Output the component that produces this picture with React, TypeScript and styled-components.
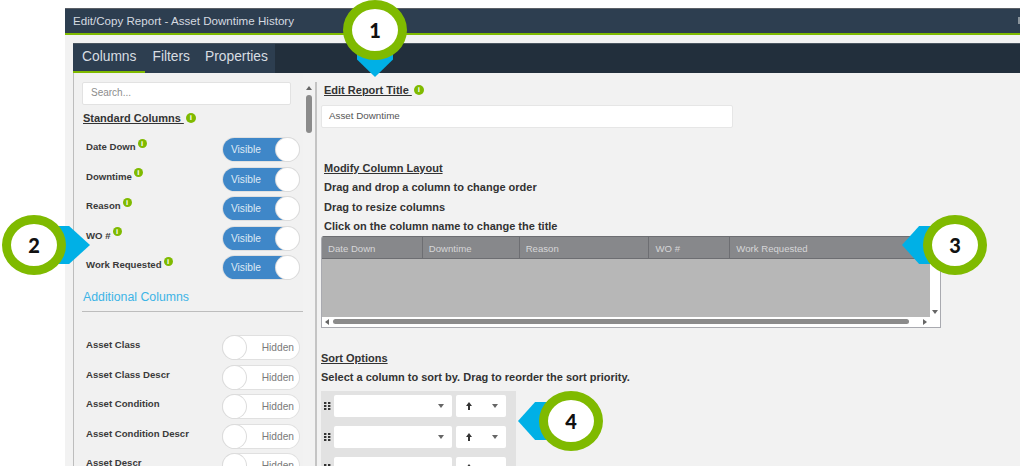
import styled, { createGlobalStyle } from 'styled-components';

const standardColumns = ['Date Down', 'Downtime', 'Reason', 'WO #', 'Work Requested'];
const additionalColumns = ['Asset Class', 'Asset Class Descr', 'Asset Condition', 'Asset Condition Descr', 'Asset Descr'];
const gridColumns = [
  { label: 'Date Down', width: 101 },
  { label: 'Downtime', width: 97 },
  { label: 'Reason', width: 130 },
  { label: 'WO #', width: 81 },
  { label: 'Work Requested', width: 200 },
];

const GlobalStyle = createGlobalStyle`
  html, body {
    margin: 0;
    background: #fff;
    font-family: "Liberation Sans", Arial, sans-serif;
  }
  * { box-sizing: border-box; }
`;

type Side = 'up' | 'down' | 'left' | 'right';
type Point = 'top' | 'left' | 'right';

function Callout({ n, cx, cy, point }: { n: number; cx: number; cy: number; point: Point }) {
  return (
    <CalloutWrap style={{ left: cx - 32, top: cy - 30 }}>
      <Pointer $point={point} />
      <Ring>{n}</Ring>
    </CalloutWrap>
  );
}

function Toggle({ on }: { on: boolean }) {
  return (
    <ToggleBox $on={on}>
      <ToggleText>{on ? 'Visible' : 'Hidden'}</ToggleText>
      <Knob />
    </ToggleBox>
  );
}

function Grip() {
  return (
    <GripIcon width="7" height="8" viewBox="0 0 7 8">
      {[0, 3, 6].map((y) => (
        <g key={y}>
          <rect x="0" y={y} width="2.4" height="2" fill="#333" />
          <rect x="4" y={y} width="2.4" height="2" fill="#333" />
        </g>
      ))}
    </GripIcon>
  );
}

function UpArrow() {
  return (
    <svg width="6" height="8" viewBox="0 0 6 8">
      <path d="M3 0 L6 4 H4 V8 H2 V4 H0 Z" fill="#333" />
    </svg>
  );
}

export default function App() {
  return (
    <Page>
      <GlobalStyle />
      <TitleBar>
        <span>Edit/Copy Report - Asset Downtime History</span>
        <TitleIcon />
      </TitleBar>
      <Body>
        <TabBar>
          <TabStrip>
            <Tab $active>Columns</Tab>
            <Tab>Filters</Tab>
            <Tab>Properties</Tab>
          </TabStrip>
        </TabBar>
        <Content>
          <Sidebar>
            <Search>Search...</Search>
            <StandardHeading>
              <u>Standard Columns&nbsp;</u>
              <Info $big>i</Info>
            </StandardHeading>
            <RowList>
              {standardColumns.map((name) => (
                <ColumnRow key={name}>
                  <RowLabel>
                    {name}
                    <Info>i</Info>
                  </RowLabel>
                  <Toggle on />
                </ColumnRow>
              ))}
            </RowList>
            <AdditionalHeading>Additional Columns</AdditionalHeading>
            <Divider />
            <HiddenList>
              {additionalColumns.map((name) => (
                <ColumnRow key={name}>
                  <RowLabel>{name}</RowLabel>
                  <Toggle on={false} />
                </ColumnRow>
              ))}
            </HiddenList>
          </Sidebar>
          <SideScroll>
            <Arrow $side="up" />
            <SideThumb />
          </SideScroll>
          <Main>
            <EditTitle>
              <u>Edit Report Title&nbsp;</u>
              <Info $big>i</Info>
            </EditTitle>
            <TitleInput>Asset Downtime</TitleInput>
            <LayoutHeading>Modify Column Layout</LayoutHeading>
            <Instruction>Drag and drop a column to change order</Instruction>
            <Instruction>Drag to resize columns</Instruction>
            <Instruction>Click on the column name to change the title</Instruction>
            <GridBox>
              <GridTop>
                <GridMain>
                  <GridHeader>
                    {gridColumns.map((c) => (
                      <HeaderCell key={c.label} style={{ width: c.width }}>
                        {c.label}
                      </HeaderCell>
                    ))}
                  </GridHeader>
                  <GridEmpty />
                </GridMain>
                <VScroll>
                  <Arrow $side="down" />
                </VScroll>
              </GridTop>
              <HScroll>
                <Arrow $side="left" />
                <HThumb />
                <Arrow $side="right" />
              </HScroll>
            </GridBox>
            <SortHeading>Sort Options</SortHeading>
            <SortHint>Select a column to sort by. Drag to reorder the sort priority.</SortHint>
            <SortPanel>
              {[0, 1, 2].map((i) => (
                <SortRow key={i}>
                  <Grip />
                  <ColumnSelect>
                    <Arrow $side="down" />
                  </ColumnSelect>
                  <DirectionSelect>
                    <UpArrow />
                    <Arrow $side="down" />
                  </DirectionSelect>
                </SortRow>
              ))}
            </SortPanel>
          </Main>
        </Content>
      </Body>
      <Callout n={1} cx={375} cy={30} point="top" />
      <Callout n={2} cx={34} cy={245} point="right" />
      <Callout n={3} cx={955} cy={245} point="left" />
      <Callout n={4} cx={571} cy={421} point="left" />
    </Page>
  );
}

const Page = styled.div`
  position: relative;
  width: 1020px;
  height: 466px;
  padding: 8px 0 0 65px;
  overflow: hidden;
  background: #fff;
`;

const TitleBar = styled.div`
  display: flex;
  align-items: center;
  justify-content: space-between;
  height: 27px;
  padding: 0 0 2px 8px;
  background: #2d3e50;
  border-top: 1px solid #5a5f66;
  border-bottom: 2px solid #7fba00;
  color: #d5dae0;
  font-size: 11.6px;
`;

const TitleIcon = styled.span`
  width: 2px;
  height: 7px;
  background: #8a949c;
`;

const Body = styled.div`
  height: 431px;
  padding: 8px 0 0 8px;
  background: #f2f2f2;
`;

const TabBar = styled.div`
  height: 30px;
  background: #222f3c;
  border-top: 1px solid #4a5560;
`;

const TabStrip = styled.div`
  display: flex;
  width: 202px;
  height: 29px;
  background: #2d3e50;
`;

const Tab = styled.div<{ $active?: boolean }>`
  padding: 0 ${({ $active }) => ($active ? '9px' : '7px')};
  margin-right: ${({ $active }) => ($active ? '0' : '1px')};
  line-height: 26px;
  font-size: 13.8px;
  color: #d8dde2;
  border-bottom: 2px solid ${({ $active }) => ($active ? '#7fba00' : 'transparent')};
`;

const Content = styled.div`
  display: flex;
  height: 393px;
`;

const Sidebar = styled.div`
  width: 230px;
  padding: 9px 0 0 8px;
  border-left: 1px solid #bdbdbd;
  background: #f1f1f1;
`;

const Search = styled.div`
  width: 209px;
  height: 23px;
  padding-left: 8px;
  background: #fff;
  border: 1px solid #e2e2e2;
  border-radius: 2px;
  color: #8d8d8d;
  font-size: 10px;
  line-height: 19px;
`;

const StandardHeading = styled.div`
  margin: 6px 0 0 1px;
  height: 14px;
  font-size: 11px;
  font-weight: 700;
  line-height: 14px;
  color: #333;
`;

const Info = styled.span<{ $big?: boolean }>`
  display: inline-block;
  position: relative;
  top: ${({ $big }) => ($big ? '-1px' : '-4px')};
  width: ${({ $big }) => ($big ? '10px' : '9px')};
  height: ${({ $big }) => ($big ? '10px' : '9px')};
  margin-left: 2px;
  border-radius: 50%;
  background: #7fba00;
  color: #fff;
  font-size: 8px;
  font-weight: 700;
  line-height: ${({ $big }) => ($big ? '10px' : '9px')};
  text-align: center;
  vertical-align: middle;
`;

const RowList = styled.div`
  display: flex;
  flex-direction: column;
  gap: 6.5px;
  margin-top: 13px;
`;

const HiddenList = styled(RowList)`
  margin-top: 24px;
`;

const ColumnRow = styled.div`
  display: flex;
  align-items: center;
  justify-content: space-between;
  width: 217px;
  height: 23px;
  padding-left: 4px;
  flex: none;
`;

const RowLabel = styled.div`
  margin-top: -6px;
  color: #3a3a3a;
  font-size: 9.6px;
  font-weight: 700;
`;

const ToggleBox = styled.div<{ $on: boolean }>`
  display: flex;
  flex-direction: ${({ $on }) => ($on ? 'row' : 'row-reverse')};
  align-items: center;
  justify-content: space-between;
  width: 76px;
  height: 23px;
  padding: ${({ $on }) => ($on ? '0 0 0 8px' : '0 5px 0 0')};
  border-radius: 12px;
  background: ${({ $on }) => ($on ? '#3f87c8' : '#fff')};
  color: ${({ $on }) => ($on ? '#dfeaf5' : '#7a7a7a')};
  box-shadow: 0 0 0 1px #e0e0e0;
`;

const ToggleText = styled.span`
  font-size: 10.2px;
`;

const Knob = styled.span`
  width: 23px;
  height: 23px;
  border-radius: 50%;
  background: #fff;
  box-shadow: 0 0 0 1px #dcdcdc;
`;

const AdditionalHeading = styled.div`
  margin: 11px 0 0 1px;
  color: #3db4e6;
  font-size: 12.3px;
  line-height: 15px;
`;

const Divider = styled.div`
  width: 221px;
  height: 1px;
  margin-top: 6px;
  background: #bdbdbd;
`;

const SideScroll = styled.div`
  position: relative;
  display: flex;
  flex-direction: column;
  align-items: center;
  gap: 5px;
  width: 14px;
  margin: 9px 0 0 0;
  padding-top: 4px;
  border-right: 2px solid #c4c4c4;
`;

const SideThumb = styled.div`
  width: 6px;
  height: 38px;
  border-radius: 3px;
  background: #8b8b8b;
`;

const Arrow = styled.span<{ $side: Side }>`
  flex: none;
  width: 0;
  height: 0;
  border-style: solid;
  border-color: transparent;
  border-width: ${({ $side }) =>
    $side === 'up' || $side === 'down' ? '4px 3px' : '3px 4px'};
  ${({ $side }) => `border-${{ up: 'bottom', down: 'top', left: 'right', right: 'left' }[$side]}-color: #666;`}
  ${({ $side }) => `border-${$side === 'up' ? 'top' : $side === 'down' ? 'bottom' : $side === 'left' ? 'left' : 'right'}-width: 0;`}
`;

const Main = styled.div`
  flex: 1;
  padding: 10px 0 0 4px;
  color: #333;
`;

const EditTitle = styled.div`
  margin-left: 3px;
  height: 14px;
  font-size: 11px;
  font-weight: 700;
  line-height: 14px;
`;

const TitleInput = styled.div`
  width: 412px;
  height: 23px;
  margin-top: 8px;
  padding-left: 7px;
  background: #fff;
  border: 1px solid #e6e6e6;
  border-radius: 2px;
  color: #555;
  font-size: 9.8px;
  line-height: 19px;
`;

const LayoutHeading = styled.div`
  margin: 33px 0 0 3px;
  height: 14px;
  font-size: 11px;
  font-weight: 700;
  line-height: 14px;
  text-decoration: underline;
`;

const Instruction = styled.div`
  margin: 5.3px 0 0 3px;
  height: 14px;
  font-size: 11px;
  font-weight: 700;
  line-height: 14px;
`;

const GridBox = styled.div`
  width: 620px;
  height: 92px;
  margin-top: 3px;
  background: #fff;
  border: 1px solid #a9aab0;
  border-top: 0;
  border-radius: 3px 3px 0 0;
  overflow: hidden;
`;

const GridTop = styled.div`
  display: flex;
  height: 81px;
`;

const GridMain = styled.div`
  display: flex;
  flex-direction: column;
  width: 608px;
  background: #b7b7b7;
`;

const GridHeader = styled.div`
  display: flex;
  height: 23px;
  background: #87888b;
  border-top: 1px solid #6d6e72;
  border-bottom: 1px solid #6d6e72;
`;

const HeaderCell = styled.div`
  padding-left: 6px;
  border-right: 1px solid #6d6e72;
  color: #d6d6d8;
  font-size: 9.6px;
  line-height: 23px;

  &:last-child {
    border-right: 0;
  }
`;

const GridEmpty = styled.div`
  flex: 1;
`;

const VScroll = styled.div`
  display: flex;
  flex-direction: column;
  justify-content: flex-end;
  align-items: center;
  flex: 1;
  padding-bottom: 3px;
`;

const HScroll = styled.div`
  display: flex;
  align-items: center;
  gap: 4px;
  height: 10px;
  padding: 0 13px 0 3px;
`;

const HThumb = styled.div`
  flex: 1;
  height: 5px;
  margin-right: 10px;
  border-radius: 3px;
  background: #8b8b8b;
`;

const SortHeading = styled.div`
  height: 14px;
  margin-top: 23px;
  font-size: 11px;
  font-weight: 700;
  line-height: 14px;
  text-decoration: underline;
`;

const SortHint = styled.div`
  height: 14px;
  margin-top: 5px;
  font-size: 11px;
  font-weight: 700;
  line-height: 14px;
`;

const SortPanel = styled.div`
  display: flex;
  flex-direction: column;
  gap: 9px;
  width: 195px;
  height: 75px;
  margin-top: 7px;
  padding: 4px 0 0 3px;
  background: #e2e2e2;
  overflow: hidden;
`;

const SortRow = styled.div`
  display: flex;
  align-items: center;
  flex: none;
  height: 22px;
`;

const GripIcon = styled.svg`
  flex: none;
  margin-right: 3px;
`;

const ColumnSelect = styled.div`
  display: flex;
  align-items: center;
  justify-content: flex-end;
  width: 118px;
  height: 22px;
  padding-right: 8px;
  background: #fff;
  border-radius: 2px;
`;

const DirectionSelect = styled(ColumnSelect)`
  justify-content: space-between;
  width: 50px;
  margin-left: 4px;
  padding: 0 8px 0 10px;
`;

const CalloutWrap = styled.div`
  position: absolute;
  width: 64px;
  height: 60px;
`;

const Ring = styled.div`
  position: relative;
  display: flex;
  align-items: center;
  justify-content: center;
  width: 64px;
  height: 60px;
  border: 9px solid #7fba00;
  border-radius: 50%;
  background: #fff;
  color: #111;
  font-family: Lato, "Noto Sans", sans-serif;
  font-size: 20px;
  font-weight: 900;
`;

const Pointer = styled.div<{ $point: Point }>`
  position: absolute;
  background: #00b0e6;
  ${({ $point }) =>
    $point === 'top'
      ? `left: 14px; top: 50px; width: 36px; height: 27px; clip-path: polygon(0 0, 100% 0, 100% 35%, 50% 100%, 0 35%);`
      : $point === 'right'
        ? `left: 50px; top: 11px; width: 38px; height: 38px; clip-path: polygon(0 0, 45% 0, 100% 50%, 45% 100%, 0 100%);`
        : `left: -21px; top: 11px; width: 38px; height: 38px; clip-path: polygon(0 50%, 45% 0, 100% 0, 100% 100%, 45% 100%);`}
`;
